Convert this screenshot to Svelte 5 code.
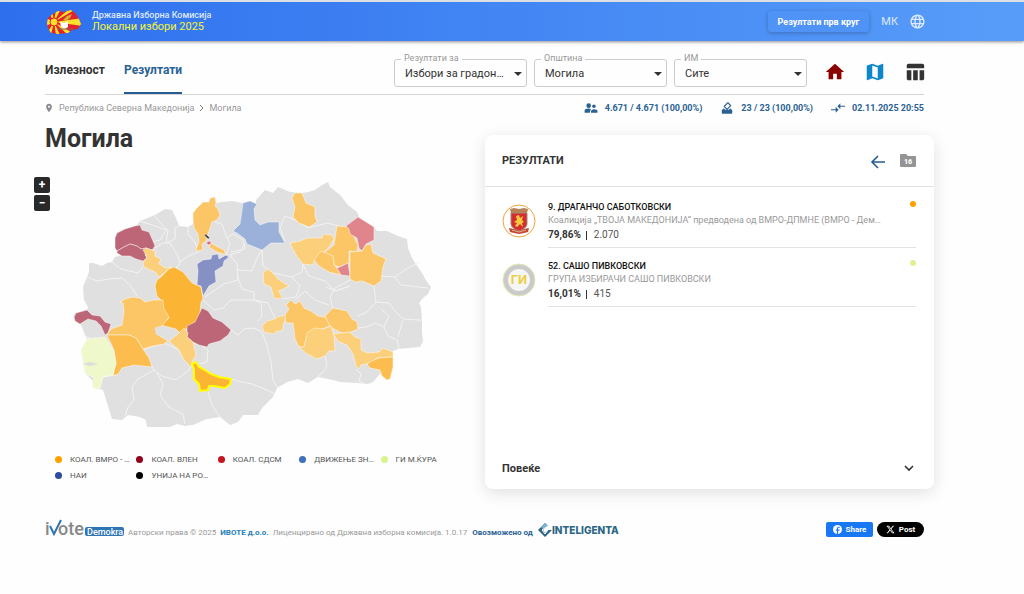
<!--
    App.svelte
    Локални избори 2025 - приказ на резултати по општина
-->
<script>
    let race = $state('mayor');
    let municipality = $state('mogila');
    let station = $state('all');

    // боени општини на картата
    const regions = [
        { fill: '#bd6677', d: 'M115 238L117 233L125 229L135 226L140 225L142 230L149 232L153 241L155 246L152 250L146 248L141 249L137 246L130 244L124 247L117 251L115 248Z' },
        { fill: '#bd6677', d: 'M117 251L124 247L130 244L137 246L141 249L146 248L149 250L145 255L147 258L143 261L136 259L130 256L122 256L117 253Z' },
        { fill: '#fccf7a', d: 'M143 250L146 248L155 251L155 256L161 259L159 264L166 268L171 267L164 273L159 277L155 272L144 267L143 263L147 257Z' },
        { fill: '#fcc666', d: 'M193 220L193 213L197 208L203 202L209 202L210 198L215 197L216 203L215 206L218 209L220 215L217 220L212 222L209 231L207 238L206 241L202 244L203 250L197 251L196 249L199 242L198 234L194 228Z' },
        { fill: '#444', d: 'M204 235L206 234L210 238L208 239Z' },
        { fill: '#df6a78', d: 'M206 243L209 241L212 243L209 245Z' },
        { fill: '#fcc666', d: 'M211 243L216 246L224 250L226 255L217 252L209 247Z' },
        { fill: '#9bb1d9', d: 'M243 203L250 201L257 204L254 209L255 220L260 225L268 222L279 222L279 232L285 243L276 243L271 243L262 250L247 244L245 239L237 233L233 231L240 224Z' },
        { fill: '#8591c5', d: 'M197 264L203 260L211 259L212 255L218 254L219 259L226 255L229 257L224 261L223 266L215 271L216 282L209 286L203 296L201 286L197 285L198 271Z' },
        { fill: '#fbb434', d: 'M157 280L161 277L169 269L174 267L183 272L192 283L201 287L203 299L201 302L199 322L191 326L180 333L176 329L161 325L169 318L163 309L162 301L157 296L155 286Z' },
        { fill: '#fcc666', d: 'M120 302L125 299L132 297L140 298L145 302L154 300L163 300L164 309L169 317L162 326L155 328L158 335L168 341L164 344L153 346L143 349L136 338L129 335L107 335L111 329L122 325L124 312L123 303Z' },
        { fill: '#fcbd4e', d: 'M107 335L129 335L136 338L143 349L149 358L152 367L134 365L122 368L118 374L113 376L114 370L116 364L114 350Z' },
        { fill: '#eff8ca', d: 'M81 350L87 339L105 337L113 349L116 362L113 375L103 377L100 389L93 388L92 382L94 378L85 373L83 362Z' },
        { fill: '#bd6677', d: 'M74 317L76 313L87 310L92 315L100 316L105 322L111 324L108 333L105 335L101 326L96 321L88 319L80 324L75 321Z' },
        { fill: '#bd6677', d: 'M187 326L195 322L200 312L202 308L208 311L213 318L222 322L231 330L228 335L220 341L209 344L207 347L199 345L193 342L187 337Z' },
        { fill: '#fccf7a', d: 'M169 341L178 334L184 328L188 333L187 337L193 342L196 355L192 362L191 367L184 360L179 350Z' },
        { fill: '#fcc666', d: 'M292 198L295 193L302 193L306 203L315 207L315 216L317 222L309 227L299 223L293 217L295 207Z' },
        { fill: '#fccf7a', d: 'M290 243L300 241L307 238L322 238L323 234L332 235L334 239L329 247L324 252L315 259L313 265L303 264L296 255Z' },
        { fill: '#fcc666', d: 'M337 226L349 227L353 235L358 245L357 252L349 251L349 263L339 267L334 265L333 256L324 253L334 245Z' },
        { fill: '#fcc666', d: 'M314 260L321 251L333 256L334 265L338 269L341 275L329 272L319 266Z' },
        { fill: '#df858b', d: 'M346 226L358 217L374 227L374 240L366 244L362 251L359 248L357 238L350 234L349 229Z' },
        { fill: '#df858b', d: 'M337 268L342 266L348 263L350 276L341 275Z' },
        { fill: '#fcc666', d: 'M350 252L362 251L366 245L371 244L373 253L386 259L383 267L381 281L374 286L362 281L355 282L350 279Z' },
        { fill: '#fccf7a', d: 'M263 273L268 269L273 273L278 279L284 283L289 286L283 289L279 291L282 297L280 299L274 298L271 287L264 284Z' },
        { fill: '#fccf7a', d: 'M262 326L267 321L275 319L277 317L286 315L284 323L282 331L277 331L273 334L264 332Z' },
        { fill: '#fcc666', d: 'M286 305L291 300L295 304L300 301L304 308L311 311L318 316L326 317L330 326L322 329L313 330L306 339L304 347L299 347L295 339L293 323L286 323L285 315L289 309Z' },
        { fill: '#fcc666', d: 'M325 316L333 308L347 311L352 319L357 322L358 329L351 332L342 333L334 329L330 326Z' },
        { fill: '#fccf7a', d: 'M299 347L304 347L306 339L307 333L314 328L323 329L331 326L334 336L335 351L329 351L325 356L317 359L307 354Z' },
        { fill: '#fccf7a', d: 'M333 334L340 333L350 332L355 337L361 339L361 350L367 353L379 352L383 348L393 352L393 357L377 358L370 363L361 365L359 369L356 366L353 354L347 345L339 342Z' },
        { fill: '#fcbd4e', d: 'M367 364L372 361L379 358L393 357L393 367L390 379L387 380L382 376L380 370L370 368Z' }
    ];

    // граници меѓу сивите општини
    const borders = [
        'M140 221L152 225L158 227L166 230L160 240L152 242',
        'M155 216L163 226L168 230L166 243L175 239L175 228L179 226',
        'M112 262L121 269L138 273L143 267',
        'M87 277L97 281L110 279L122 278L131 286L137 296',
        'M155 248L163 243L170 243L178 256L180 264L176 268',
        'M180 262L190 255L198 252L195 242L188 234L188 227',
        'M215 222L222 224L227 238L230 244L226 255',
        'M227 238L233 234L243 240L245 249L231 252',
        'M245 244L240 252L230 255L237 264L238 280L224 284L205 297',
        'M238 270L252 271L257 258L262 250',
        'M237 275L242 289L254 292L254 300L261 303L262 316L258 321',
        'M262 250L263 266L273 273L292 277L302 272L303 264',
        'M202 299L214 310L223 308L231 300L245 300L254 300',
        'M282 299L296 297L300 286L292 277',
        'M303 265L309 276L325 281L335 291L350 286',
        'M350 280L335 288L330 297L333 308M350 286L336 291L326 287',
        'M285 241L280 228L285 216L295 220L308 228L327 223L339 226',
        'M381 276L395 277L408 268L420 262',
        'M395 277L401 285L428 288',
        'M374 286L376 302L389 303L396 312L403 319L418 320L422 320',
        'M376 302L367 312L358 316',
        'M358 328L367 327L375 323L384 327L389 316L381 309',
        'M384 327L388 336L397 340L399 349',
        'M403 320L398 337',
        'M231 330L238 335L244 329L254 328L262 332L267 345L271 362L273 380L277 387',
        'M193 343L201 345L208 350L207 362L199 364',
        'M142 350L151 347L165 343L179 350L185 361L191 366',
        'M143 350L146 357L154 370L162 376L176 380L189 370L193 362',
        'M103 377L116 375',
        'M154 370L138 379L132 387L134 400L128 407L125 416',
        'M157 373L163 384L160 395L169 407L183 414L185 424',
        'M208 392L212 405L220 417',
        'M231 379L242 382L252 384L267 390L275 394',
        'M325 356L327 366L323 372L318 377',
        'M356 369L361 374L359 381L364 384',
        'M94 340L85 336L81 325',
        'M254 300L268 303L275 318',
        'M295 300L305 291L315 300L329 305'
    ];

    const parties = [
        { name: 'КОАЛ. ВМРО - ДПМНЕ', color: '#ffa200' },
        { name: 'КОАЛ. ВЛЕН', color: '#94001f' },
        { name: 'КОАЛ. СДСМ', color: '#c4161c' },
        { name: 'ДВИЖЕЊЕ ЗНАМ', color: '#3f6fbd' },
        { name: 'ГИ М.ЌУРА', color: '#dcf291' },
        { name: 'НАИ', color: '#2f4aa3' },
        { name: 'УНИЈА НА РОМИ', color: '#000' }
    ];

    const candidates = [
        {
            name: '9. ДРАГАНЧО САБОТКОВСКИ',
            party: 'Коалиција „ТВОЈА МАКЕДОНИЈА“ предводена од ВМРО-ДПМНЕ (ВМРО - Демократска партија)',
            percent: '79,86%',
            votes: '2.070',
            color: '#ffa200'
        },
        {
            name: '52. САШО ПИВКОВСКИ',
            party: 'ГРУПА ИЗБИРАЧИ САШО ПИВКОВСКИ',
            percent: '16,01%',
            votes: '415',
            color: '#dcf291'
        }
    ];
</script>

<header>
    <svg class="flag" viewBox="0 0 36 26" aria-hidden="true">
        <clipPath id="land">
            <path d="M2 9L7 5L12 2L18 3L25 1L30 5L33 10L35 15L32 20L26 21L22 24L12 25L5 24L2 19L1 14Z" />
        </clipPath>
        <g clip-path="url(#land)">
            <rect width="36" height="26" fill="#e3222b" />
            <path fill="#ffe12b" d="M8 13L0 9V17ZM8 13L1 0H6ZM8 13L10 0H15ZM8 13L23 0H30ZM8 13L36 9V17ZM8 13L30 26H22ZM8 13L14 26H10ZM8 13L5 26H0Z" />
            <circle cx="8" cy="13" r="4" fill="#ffe12b" stroke="#e3222b" />
        </g>
        <path fill="#fff" d="M14 13L18 14L22 12L22 18L19 20L15 18Z" />
        <path fill="#d3b32d" d="M17 11L21 7L26 5L24 9L20 12Z" />
        <path stroke="#8a6a68" d="M11 20H27" />
    </svg>
    <div class="brand">
        <span>Државна Изборна Комисија</span>
        <strong>Локални избори 2025</strong>
    </div>
    <button class="round">Резултати прв круг</button>
    <button class="lang">
        МК
        <svg viewBox="0 0 24 24" fill="currentColor" aria-hidden="true">
            <path d="M11.99 2C6.47 2 2 6.48 2 12s4.47 10 9.99 10C17.52 22 22 17.52 22 12S17.52 2 11.99 2zm6.93 6h-2.95c-.32-1.25-.78-2.45-1.38-3.56 1.84.63 3.37 1.91 4.33 3.56zM12 4.04c.83 1.2 1.48 2.53 1.91 3.96h-3.82c.43-1.43 1.08-2.76 1.91-3.96zM4.26 14C4.1 13.36 4 12.69 4 12s.1-1.36.26-2h3.38c-.08.66-.14 1.32-.14 2s.06 1.34.14 2H4.26zm.82 2h2.95c.32 1.25.78 2.45 1.38 3.56-1.84-.63-3.37-1.9-4.33-3.56zm2.95-8H5.08c.96-1.66 2.49-2.93 4.33-3.56C8.81 5.55 8.35 6.75 8.03 8zM12 19.96c-.83-1.2-1.48-2.53-1.91-3.96h3.82c-.43 1.43-1.08 2.76-1.91 3.96zM14.34 14H9.66c-.09-.66-.16-1.32-.16-2s.07-1.35.16-2h4.68c.09.65.16 1.32.16 2s-.07 1.34-.16 2zm.25 5.56c.6-1.11 1.06-2.31 1.38-3.56h2.95c-.96 1.65-2.49 2.93-4.33 3.56zM16.36 14c.08-.66.14-1.32.14-2s-.06-1.34-.14-2h3.38c.16.64.26 1.31.26 2s-.1 1.36-.26 2h-3.38z" />
        </svg>
    </button>
</header>

<div class="page">
    <div class="toolbar">
        <nav>
            <a href="#turnout">Излезност</a>
            <a href="#results" class="active">Резултати</a>
        </nav>
        <div class="filters">
            <div class="field">
                <label for="race">Резултати за</label>
                <select id="race" bind:value={race}>
                    <option value="mayor">Избори за градоначалник</option>
                </select>
            </div>
            <div class="field">
                <label for="municipality">Општина</label>
                <select id="municipality" bind:value={municipality}>
                    <option value="mogila">Могила</option>
                </select>
            </div>
            <div class="field">
                <label for="station">ИМ</label>
                <select id="station" bind:value={station}>
                    <option value="all">Сите</option>
                </select>
            </div>
        </div>
        <div class="views">
            <button aria-label="Почетна"><svg viewBox="0 0 24 24" fill="#8b0000"><path d="M10 20v-6h4v6h5v-8h3L12 3 2 12h3v8z" /></svg></button>
            <button aria-label="Карта"><svg viewBox="0 0 24 24" fill="#0d86cb"><path d="M20.5 3l-.16.03L15 5.100 9 3 3.360 4.900c-.21.07-.36.25-.36.48V20.500c0 .28.22.5.5.5l.16-.03L9 18.900l6 2.100 5.640-1.900c.21-.07.36-.25.36-.48V3.500c0-.28-.22-.5-.5-.5zM15 19l-6-2.110V5l6 2.110V19z" /></svg></button>
            <button aria-label="Табела"><svg viewBox="0 0 24 24" fill="#333"><path d="M10 10.020h5V21h-5zM17 21h3c1.100 0 2-.9 2-2v-9h-5v11zm3-18H5c-1.100 0-2 .9-2 2v3h19V5c0-1.100-.9-2-2-2zM3 19c0 1.100.9 2 2 2h3V10H3v9z" /></svg></button>
        </div>
    </div>

    <div class="info">
        <div class="crumbs">
            <svg viewBox="0 0 24 24" fill="#8c8c8c" aria-hidden="true"><path d="M12 2C8.130 2 5 5.130 5 9c0 5.250 7 13 7 13s7-7.750 7-13c0-3.870-3.130-7-7-7zm0 9.500a2.500 2.500 0 1 1 0-5 2.500 2.500 0 0 1 0 5z" /></svg>
            <a href="#country">Република Северна Македонија</a>
            <svg class="sep" viewBox="0 0 6 8" fill="none" stroke="#777" aria-hidden="true"><path d="M1 1L4 4L1 7" /></svg>
            <span>Могила</span>
        </div>
        <div class="stats">
            <span>
                <svg viewBox="0 0 24 24" fill="currentColor" aria-hidden="true"><circle cx="8" cy="8" r="4" /><circle cx="17" cy="9" r="3" /><path d="M1 20V17Q1 13 8 13Q11 13 12 14Q10 16 10 20ZM12 20V17Q13 14 17 14Q23 14 23 17V20Z" /></svg>
                4.671 / 4.671 (100,00%)
            </span>
            <span>
                <svg viewBox="0 0 24 24" fill="currentColor" aria-hidden="true"><path d="M18 13h-.68l-2 2H8.830l-2-2H6l-3 3v4c0 1.100.89 2 1.990 2H19c1.100 0 2-.89 2-2v-4l-3-3zm-1-5.050l-4.950 4.950-3.540-3.540 4.950-4.950L17 7.950zm-4.240-5.660L6.390 8.660c-.39.39-.39 1.020 0 1.410l4.950 4.950c.39.39 1.020.39 1.410 0l6.360-6.360c.39-.39.39-1.020 0-1.410L14.160 2.300c-.38-.4-1.010-.4-1.400-.01z" /></svg>
                23 / 23 (100,00%)
            </span>
            <span>
                <svg viewBox="0 0 24 24" fill="currentColor" aria-hidden="true"><path d="M8 14H0v2h8v4l5-5-5-5v4zM16 10V14L11 9l5-5v4h8v2z" /></svg>
                02.11.2025 20:55
            </span>
        </div>
    </div>

    <main>
        <section class="left">
            <h1>Могила</h1>
            <div class="map">
                <svg viewBox="45 170 440 270" role="img" aria-label="Карта на општини">
                    <path
                        fill="#e0e0e0"
                        d="M89 263L93 263L102 266L107 263L112 262L115 257L122 255L115 238L117 233L125 229L137 225L140 221L155 215L165 209L172 210L176 218L179 226L188 227L193 224L193 213L197 208L203 202L209 202L210 198L215 197L216 203L222 202L232 201L242 203L250 201L256 204L256 200L265 190L273 193L278 187L290 192L302 193L308 192L315 190L322 185L328 182L330 187L340 195L348 205L357 212L359 217L374 227L377 231L387 231L398 236L407 239L408 248L412 258L415 263L422 273L427 282L431 287L428 294L423 298L419 303L421 307L422 320L422 332L423 341L420 347L398 349L393 351L393 367L390 379L387 380L380 374L373 382L368 384L357 383L340 382L333 380L318 377L308 383L298 379L287 382L277 388L273 397L262 408L258 415L243 415L238 422L230 425L220 417L207 419L193 425L185 426L177 424L170 427L147 427L146 420L140 417L128 415L122 420L112 419L103 390L93 388L92 380L85 373L81 350L87 339L81 325L76 322L74 314L87 310L88 307L84 300L83 287L87 277L89 272Z"
                    />
                    {#each borders as d}
                        <path {d} fill="none" stroke="#f3f3f3" />
                    {/each}
                    {#each regions as r}
                        <path d={r.d} fill={r.fill} stroke="#fff" stroke-opacity=".45" />
                    {/each}
                    <path fill="#ddd" d="M83 364L90 362L98 364L90 366Z" />
                    <path fill="#e0e0e0" d="M155 328L164 326L175 331L173 335L168 338L163 336L156 335Z" />
                    <!-- избрана општина -->
                    <path
                        fill="#fbb434"
                        stroke="#ffff00"
                        stroke-width="2"
                        d="M192 364L196 362L199 367L205 370L211 374L219 377L231 379L230 384L225 388L214 386L209 386L208 390L200 391L199 384L194 379L194 369Z"
                    />
                </svg>
                <div class="zoom">
                    <button aria-label="Зголеми">+</button>
                    <button aria-label="Намали">−</button>
                </div>
            </div>
            <ul class="legend">
                {#each parties as p}
                    <li><i style="background: {p.color}"></i><span>{p.name}</span></li>
                {/each}
            </ul>
        </section>

        <section class="card">
            <div class="card-head">
                <h2>РЕЗУЛТАТИ</h2>
                <button aria-label="Назад">
                    <svg viewBox="0 0 16 16" fill="none" stroke="#235d91" stroke-width="1.6"><path d="M15 9H2M8 3L2 9L8 15" /></svg>
                </button>
                <button class="folder" aria-label="Архива">
                    <svg viewBox="0 0 16 14" fill="#949494"><path d="M1 0H6L8 2H15Q16 2 16 3V12Q16 13 15 13H1Q0 13 0 12V1Q0 0 1 0Z" /><text x="8" y="10">16</text></svg>
                </button>
            </div>
            <ul class="candidates">
                {#each candidates as c, i}
                    <li>
                        {#if i === 0}
                            <svg class="badge" viewBox="0 0 34 34" aria-hidden="true">
                                <circle cx="17" cy="17" r="16" fill="#fff" stroke="#eda63a" />
                                <path fill="#b98254" d="M8 5L12 4L17 5L22 4L26 5L25 9H9Z" />
                                <path fill="#d32c31" stroke="#a88a70" d="M9 9H25V20Q25 24 17 27Q9 24 9 20Z" />
                                <path fill="#f7c83c" d="M14 12L17 11L18 14L21 12L20 16L22 18L20 19L21 23L18 20L15 23L13 22L15 19L12 18L15 16Z" />
                                <path fill="#c4473a" d="M7 24L12 25L17 27L22 25L27 24L26 28L22 29L17 30L12 29L8 28Z" />
                                <path stroke="#e3b187" d="M10 26L17 28L24 26" fill="none" />
                            </svg>
                        {:else}
                            <svg class="badge" viewBox="0 0 34 34" aria-hidden="true">
                                <circle cx="17" cy="17" r="16" fill="#cacaca" stroke="#dfeab2" />
                                <circle cx="17" cy="17" r="11" fill="#f6f6f6" />
                                <text x="17" y="21">ГИ</text>
                            </svg>
                        {/if}
                        <div class="who">
                            <h3>{c.name}</h3>
                            <p class="party">{c.party}</p>
                            <p class="votes"><b>{c.percent}</b><em></em><span>{c.votes}</span></p>
                            <i style="background: {c.color}"></i>
                        </div>
                    </li>
                {/each}
            </ul>
            <button class="more">
                Повеќе
                <svg viewBox="0 0 10 8" fill="none" stroke="#333" stroke-width="1.6" aria-hidden="true"><path d="M1 2L5 6L9 2" /></svg>
            </button>
        </section>
    </main>

    <footer>
        <svg class="ivote" viewBox="0 0 79 20" role="img" aria-label="iVote Demokra">
            <text class="word" x="0" y="16">i</text>
            <path d="M5 7L9 15L16 1" fill="none" stroke="#2f74b5" stroke-width="2" />
            <text class="word" x="13" y="16">ote</text>
            <rect x="40" y="8" width="39" height="9" rx="2" fill="#2f74b5" />
            <text class="demokra" x="42" y="16">Demokra</text>
        </svg>
        <span>Авторски права © 2025</span>
        <a href="#ivote">ИВОТЕ д.о.о.</a>
        <span>Лиценцирано од Државна изборна комисија. 1.0.17</span>
        <b>Овозможено од</b>
        <svg class="inteligenta" viewBox="0 0 82 16" role="img" aria-label="Inteligenta">
            <path fill="#2c6586" d="M7 1L10 4L5 8L7 11L10 8H14L7 15L0 8Z" />
            <path fill="#79b3d0" d="M7 1L10 4L5 7L3 5Z" />
            <path fill="none" stroke="#fefefe" d="M10 4L4 8L7 12L10 8" />
            <text x="14" y="12">INTELIGENTA</text>
        </svg>
        <div class="share">
            <button class="fb">
                <svg viewBox="0 0 16 16" aria-hidden="true"><circle cx="8" cy="8" r="8" fill="#fff" /><path fill="#1877f2" d="M7 16V10H5V8H7V6Q7 3 10 3H12V5H10Q9 5 9 6V8H12L11 10H9V16Z" /></svg>
                Share
            </button>
            <button class="x">
                <svg viewBox="0 0 24 24" fill="#fff" aria-hidden="true"><path d="M18.240 2.250h3.310l-7.230 8.260 8.500 11.240H16.170l-5.210-6.820L5 21.750H1.680l7.730-8.840L1.250 2.250H8.080l4.710 6.230zm-1.160 17.520h1.830L7.080 4.130H5.120z" /></svg>
                Post
            </button>
        </div>
    </footer>
</div>

<style>
:global(body) {
    background: #fefefe;
    font-family: Roboto, "Liberation Sans", sans-serif;
    color: #333;
}
h1, h2, h3, p, ul { margin: 0; padding: 0; }
ul { list-style: none; }
a { color: inherit; text-decoration: none; }
button { border: 0; padding: 0; background: none; font: inherit; color: inherit; cursor: pointer; }
svg { display: block; flex: none; }

header {
    display: flex; align-items: center;
    height: 39px; padding: 0 98px 0 46px;
    border-top: 2px solid #dcdfe4;
    background: linear-gradient(90deg, #2e6fee, #589df9);
    box-shadow: 0 1px 3px rgba(0,0,0,.45);
    color: #fff;
}
.flag { width: 36px; height: 26px; }
.brand { display: flex; flex-direction: column; margin: 0 auto 2px 10px; }
.brand span { font-size: 9px; line-height: 11px; color: #dfe9ff; font-weight: 500; }
.brand strong { font-size: 11px; line-height: 11px; font-weight: 400; color: #f7f52b; }
.round {
    height: 21px; padding: 0 10px; margin-right: 12px;
    border-radius: 3px; background: #4f93f7;
    box-shadow: 0 1px 4px rgba(0,0,0,.25);
    font-size: 9px; font-weight: 700;
}
.lang { display: flex; align-items: center; gap: 11px; font-size: 11px; color: #dbe8ff; }
.lang svg { width: 17px; height: 17px; }

.page { padding: 0 100px 0 45px; }
.toolbar { display: flex; height: 53px; border-bottom: 1px solid #d6d6d6; }
nav { display: flex; gap: 19px; margin-right: auto; }
nav a { padding-top: 21px; font-size: 12px; line-height: 16px; font-weight: 700; border-bottom: 2px solid transparent; }
nav .active { color: #2a6294; border-color: #235d91; }
.filters { display: flex; gap: 7px; padding-top: 18px; }
.field { position: relative; width: 133px; height: 28px; }
.field label {
    position: absolute; left: 7px; top: -7px;
    padding: 0 3px; background: #fefefe;
    font-size: 9px; line-height: 12px; color: #999;
}
.field select {
    width: 100%; height: 100%; padding: 0 20px 0 10px;
    border: 1px solid #ccc; border-radius: 3px; appearance: none;
    background: #fefefe; font: 11px Roboto, sans-serif; color: #333;
    overflow: hidden; text-overflow: ellipsis; white-space: nowrap;
}
.field::after {
    content: ''; position: absolute; right: 5px; top: 13px;
    border: 4px solid transparent; border-top-color: #333; border-bottom: 0;
    pointer-events: none;
}
.views { display: flex; gap: 18px; padding: 20px 0 0 17px; margin-right: -2px; align-items: flex-start; }
.views svg { width: 22px; height: 22px; }

.info { display: flex; justify-content: space-between; height: 26px; font-size: 9px; }
.crumbs, .stats, .stats span { display: flex; align-items: center; }
.crumbs { color: #999; }
.crumbs svg { width: 10px; height: 10px; margin: 0 5px 0 -1px; }
.crumbs .sep { width: 6px; height: 8px; margin: 0 4px 0 5px; }
.stats { gap: 18px; font-weight: 700; color: #2a6294; }
.stats span { gap: 7px; }
.stats svg { width: 14px; height: 14px; }

main { display: grid; grid-template-columns: minmax(0, 440fr) minmax(0, 449fr); margin-right: -10px; }
h1 { font-size: 25px; line-height: 36px; padding-bottom: 13px; font-weight: 700; }
.map { position: relative; }
.map > svg { width: 100%; height: auto; }
.zoom { position: absolute; left: -11px; top: 7px; display: grid; gap: 2px; }
.zoom button {
    width: 16px; height: 16px; border-radius: 2px;
    background: #292929; color: #fff;
    font-size: 12px; line-height: 16px; font-weight: 700;
}
.legend { display: grid; grid-template-columns: repeat(5, minmax(0, 1fr)); column-gap: 5px; padding: 11px 28px 0 10px; }
.legend li { display: flex; align-items: center; gap: 8px; height: 16px; font-size: 8px; color: #555; }
.legend i { flex: none; width: 7px; height: 7px; border-radius: 50%; }
.legend span { overflow: hidden; text-overflow: ellipsis; white-space: nowrap; }

.card {
    display: flex; flex-direction: column; height: 354px; margin-top: 14px;
    border-radius: 8px; background: #fff;
    box-shadow: 0 4px 16px rgba(0,0,0,.12);
}
.card-head {
    display: flex; align-items: center; gap: 14px;
    height: 51px; padding: 0 18px 0 17px; border-bottom: 1px solid #e0e0e0;
}
h2 { margin-right: auto; font-size: 11px; font-weight: 700; }
.card-head svg { width: 16px; height: 16px; }
.card-head .folder svg { height: 14px; }
.folder text { fill: #fff; font: 900 7px Roboto, sans-serif; text-anchor: middle; }
.candidates { flex: 1; padding: 2px 18px 0 17px; }
.candidates li { display: flex; gap: 12px; }
.badge { width: 34px; height: 34px; margin-top: 15px; }
.badge text { fill: #ecd043; font: 700 13px Roboto, sans-serif; text-anchor: middle; }
.who { position: relative; flex: 1; min-width: 0; padding: 11px 32px 4px 0; border-bottom: 1px solid #e3e3e3; }
h3 { font-size: 9px; line-height: 14px; font-weight: 500; color: #111; }
.party { font-size: 9px; line-height: 13px; color: #999; overflow: hidden; text-overflow: ellipsis; white-space: nowrap; }
.votes { display: flex; align-items: center; font-size: 10px; line-height: 16px; }
.votes em { width: 1px; height: 9px; margin: 0 7px 0 5px; background: #333; }
.votes span { color: #555; }
.who i { position: absolute; right: 0; top: 12px; width: 6px; height: 6px; border-radius: 50%; }
.more {
    display: flex; align-items: center; justify-content: space-between;
    height: 42px; padding: 0 20px 0 17px;
    font-size: 11px; font-weight: 700;
}
.more svg { width: 10px; height: 8px; }

footer { display: flex; align-items: center; padding-top: 30px; font-size: 8px; color: #999; }
.ivote { width: 79px; height: 20px; margin-right: 4px; }
.word { font: 500 18px Roboto, sans-serif; fill: #888; }
.demokra { font: 500 9px Roboto, sans-serif; fill: #fff; }
footer a { margin: 0 4px; color: #1f7fb8; font-weight: 700; }
footer b { margin: 0 5px; color: #2a6294; }
footer span, footer a, footer b { padding-top: 7px; white-space: nowrap; }
.inteligenta { width: 82px; height: 16px; margin-top: 2px; }
.inteligenta text { font: 800 9px Inter, "DejaVu Sans", sans-serif; font-size: 10px; fill: #2c6586; }
.share { display: flex; gap: 4px; margin-left: auto; }
.share button {
    display: flex; align-items: center; justify-content: center; gap: 4px;
    height: 15px; width: 47px; color: #fff; font-size: 8px; font-weight: 700;
}
.share svg { width: 9px; height: 9px; }
.share .fb { background: #1877f2; border-radius: 2px; }
.share .x { background: #000; border-radius: 8px; }
</style>
